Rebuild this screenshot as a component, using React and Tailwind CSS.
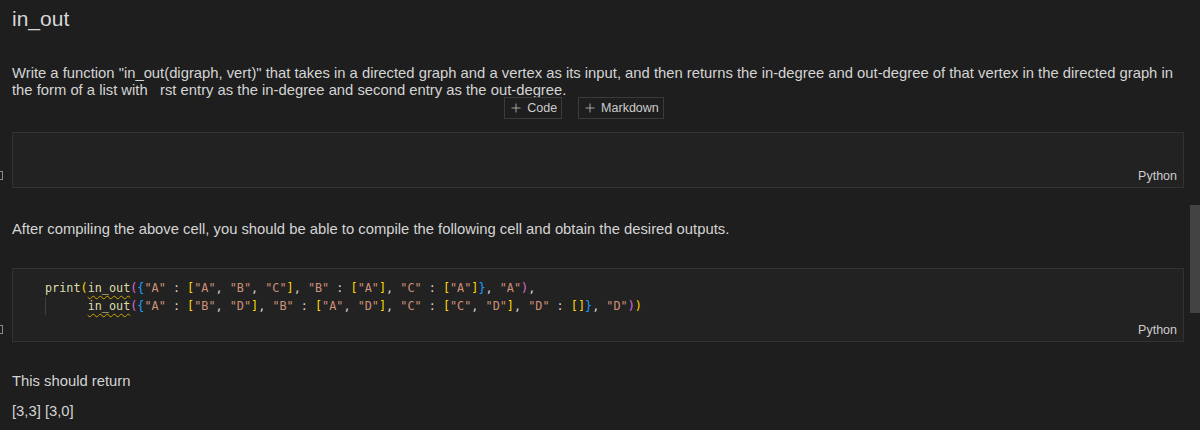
import { Plus } from "lucide-react";

const sans = { fontFamily: '"Liberation Sans", Arial, sans-serif' };
const mono = { fontFamily: '"DejaVu Sans Mono", monospace' };

// token helpers for the code cell
const Y = ({ children }) => <span className="text-[#ffd700]">{children}</span>;
const M = ({ children }) => <span className="text-[#da70d6]">{children}</span>;
const B = ({ children }) => <span className="text-[#179fff]">{children}</span>;
const S = ({ children }) => <span className="text-[#ce9178]">{children}</span>;
const Fn = ({ children }) => (
  <span className="text-[#dcdcaa] underline decoration-wavy decoration-[#cca700] underline-offset-[3px] decoration-1">
    {children}
  </span>
);

function Cell({ children }) {
  return (
    <div className="flex">
      <div className="flex w-[12px] flex-col justify-end pb-[8px]">
        <div className="h-[9px] w-[3px] border-y border-r border-[#8a8a8a]" />
      </div>
      <div className="w-[1172px] border border-[#333333] bg-[#222222]">
        <div className="pb-[2px] pl-[32px] pt-[10px]">{children}</div>
        <div className="flex h-[24px] items-center justify-end pr-[6px] pt-[3px] text-[12.5px] text-[#cccccc]" style={sans}>
          Python
        </div>
      </div>
    </div>
  );
}

export default function App() {
  return (
    <div className="relative h-[430px] w-[1200px] overflow-hidden bg-[#1e1e1e] text-[#d4d4d4]" style={sans}>
      <div className="pl-[12px] pt-[7px] text-[21px] leading-[24px] text-[#d6d6d6]">in_out</div>

      <p className="mt-[34px] whitespace-nowrap pl-[12px] text-[14.8px] leading-[17px]">
        Write a function "in_out(digraph, vert)" that takes in a directed graph and a vertex as its input, and then
        returns the in-degree and out-degree of that vertex in the directed graph in
        <br />
        the form of a list with{"\u00a0\u00a0 "}rst entry as the in-degree and second entry as the out-degree.
      </p>

      <div className="mt-[-2px] flex justify-center gap-[16px] pr-[32px] text-[12.5px] text-[#cccccc]">
        <div className="flex h-[22px] items-center gap-[4px] border border-[#3a3a3a] bg-[#1e1e1e] pl-[4px] pr-[4px]">
          <Plus size={14} strokeWidth={1.3} />
          <span>Code</span>
        </div>
        <div className="flex h-[22px] items-center gap-[4px] border border-[#3a3a3a] bg-[#1e1e1e] pl-[4px] pr-[4px]">
          <Plus size={14} strokeWidth={1.3} />
          <span>Markdown</span>
        </div>
      </div>

      <div className="mt-[13px]">
        <Cell>
          <div className="h-[18px]" />
        </Cell>
      </div>

      <p className="mt-[33px] pl-[12px] text-[14.8px] leading-[17px]">
        After compiling the above cell, you should be able to compile the following cell and obtain the desired outputs.
      </p>

      <div className="mt-[30px]">
        <Cell>
          <div className="whitespace-pre text-[11.8px] leading-[18px] text-[#d4d4d4]" style={mono}>
            <div>
              <span className="text-[#dcdcaa]">print</span>
              <Y>(</Y>
              <Fn>in_out</Fn>
              <M>(</M>
              <B>{"{"}</B>
              <S>"A"</S> : <Y>[</Y>
              <S>"A"</S>, <S>"B"</S>, <S>"C"</S>
              <Y>]</Y>, <S>"B"</S> : <Y>[</Y>
              <S>"A"</S>
              <Y>]</Y>, <S>"C"</S> : <Y>[</Y>
              <S>"A"</S>
              <Y>]</Y>
              <B>{"}"}</B>, <S>"A"</S>
              <M>)</M>,
            </div>
            <div className="shadow-[inset_1px_0_0_#404040]">
              {"      "}
              <Fn>in_out</Fn>
              <M>(</M>
              <B>{"{"}</B>
              <S>"A"</S> : <Y>[</Y>
              <S>"B"</S>, <S>"D"</S>
              <Y>]</Y>, <S>"B"</S> : <Y>[</Y>
              <S>"A"</S>, <S>"D"</S>
              <Y>]</Y>, <S>"C"</S> : <Y>[</Y>
              <S>"C"</S>, <S>"D"</S>
              <Y>]</Y>, <S>"D"</S> : <Y>[]</Y>
              <B>{"}"}</B>, <S>"D"</S>
              <M>)</M>
              <Y>)</Y>
            </div>
          </div>
        </Cell>
      </div>

      <p className="mt-[31px] pl-[12px] text-[14.8px] leading-[17px]">This should return</p>
      <p className="mt-[13px] pl-[12px] text-[14.8px] leading-[17px]">[3,3] [3,0]</p>

      {/* overlay scrollbar */}
      <div className="absolute right-0 top-[205px] h-[108px] w-[10px] bg-[#434343]" />
    </div>
  );
}
